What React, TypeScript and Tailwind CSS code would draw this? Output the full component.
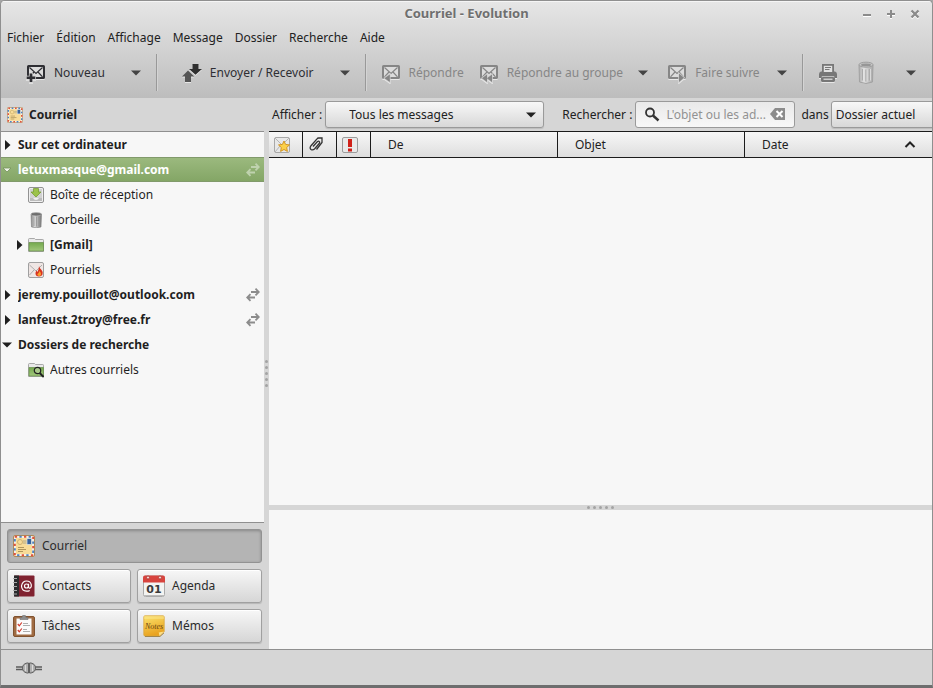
import type { ReactNode } from "react";

function CaretDown({ className = "text-[#333]" }: { className?: string }) {
  return (
    <svg width="10" height="6" viewBox="0 0 10 6" className={className} aria-hidden="true">
      <path d="M0 0.5h10L5 5.5z" fill="currentColor" />
    </svg>
  );
}

type Badge = "new" | "reply" | "replyAll" | "forward";

const badgePaths: Record<Badge, string> = {
  new: "M3.700 10.500h2.600v3h3v2.600h-3v3H3.700v-3h-3v-2.600h3z",
  reply: "M8.800 11.500v7.500L3.500 15.200z",
  replyAll: "M8 11.500v7.500L3 15.200zM13 11.500v7.500L8 15.200z",
  forward: "M12 10.500v8.500l5-4.200z",
};

function EnvelopeIcon({ badge }: { badge: Badge }) {
  return (
    <svg width="20" height="20" viewBox="0 0 20 20" aria-hidden="true" className="shrink-0 drop-shadow-[0_1px_0_rgba(255,255,255,0.6)]">
      <rect x="2" y="3" width="16" height="12" rx="0.500" fill="#dcdcdc" stroke="currentColor" strokeWidth="2" />
      <path d="M3.500 4.500L10 10.500l6.500-6M3.500 13.800L8 9M16.500 13.800L12 9" fill="none" stroke="currentColor" strokeWidth="1.200" />
      <path d={badgePaths[badge]} fill="#cfcfcf" stroke="#cfcfcf" strokeWidth="1.500" />
      <path d={badgePaths[badge]} fill="currentColor" />
    </svg>
  );
}

function SendReceiveIcon() {
  return (
    <svg width="20" height="20" viewBox="0 0 20 20" aria-hidden="true" className="shrink-0 drop-shadow-[0_1px_0_rgba(255,255,255,0.6)]">
      <path d="M10.500 1h6v5H20l-6.500 5.800L7 6h3.500z" fill="#303030" />
      <path d="M6 7.500l6.200 6H9V19H3v-5.500H0z" fill="#555" />
    </svg>
  );
}

function PrinterIcon() {
  return (
    <svg width="20" height="20" viewBox="0 0 20 20" aria-hidden="true" className="drop-shadow-[0_1px_0_rgba(255,255,255,0.6)]">
      <path d="M4 1h12v9H4z" fill="#777" />
      <path d="M5.800 2.800h8.400V9H5.800z" fill="#e2e2e2" />
      <path d="M7 4.500h6M7 6.500h4.500" stroke="#777" />
      <path d="M3 8.500h1.500V10h11V8.500H17q2 .5 2 2.500v4h-2v2.500q0 1.500-1.500 1.500h-11Q3 19 3 17.500V15H1v-4q0-2 2-2.500z" fill="#777" />
      <path d="M4 14.500v-1h12v1" fill="none" stroke="#bdbdbd" />
      <path d="M5.500 15.500h9V17h-9z" fill="#cdcdcd" />
    </svg>
  );
}

function BinIcon() {
  return (
    <svg width="16" height="24" viewBox="0 0 16 24" aria-hidden="true">
      <defs>
        <linearGradient id="bin" x1="0" x2="1">
          <stop offset="0" stopColor="#acacac" />
          <stop offset="0.35" stopColor="#e2e2e2" />
          <stop offset="1" stopColor="#a8a8a8" />
        </linearGradient>
      </defs>
      <path d="M1 4h14l-.5 17q-6.500 3-13 0z" fill="url(#bin)" stroke="#a2a2a2" />
      <path d="M4.500 8v11.500M8 8.500V20.500M11.500 8v11.500" stroke="#ababab" strokeWidth="1.400" />
      <path d="M5.500 8v11.500M9 8.500V20.500M12.500 8v11.500" stroke="#e8e8e8" strokeWidth="0.700" />
      <ellipse cx="8" cy="3.700" rx="7" ry="2.500" fill="#c8c8c8" stroke="#9d9d9d" />
      <ellipse cx="8" cy="3.900" rx="5" ry="1.300" fill="#969696" />
    </svg>
  );
}

function MailStampIcon({ size }: { size: number }) {
  return (
    <svg width={size} height={size} viewBox="0 0 22 22" aria-hidden="true" className="shrink-0">
      <rect x="0.500" y="0.500" width="21" height="21" rx="1.500" fill="#f6efe2" stroke="#b08a55" />
      <rect x="1.800" y="1.800" width="18.400" height="18.400" fill="none" stroke="#e0523f" strokeWidth="2" strokeDasharray="2.300 6.900" />
      <rect x="1.800" y="1.800" width="18.400" height="18.400" fill="none" stroke="#4b83c4" strokeWidth="2" strokeDasharray="2.300 6.900" strokeDashoffset="-4.600" />
      <rect x="3" y="3" width="16" height="16" fill="#f8dc98" />
      <circle cx="7" cy="7" r="2.500" fill="none" stroke="#c9ad6c" strokeWidth="0.900" />
      <path d="M10 6h4M10 8h4" stroke="#9c9a86" strokeWidth="0.800" />
      <rect x="14" y="3.500" width="4.500" height="6" fill="#35619d" stroke="#dfe8f4" strokeWidth="0.700" />
      <path d="M5 12.500h6M5 14.500h8M5 16.500h5" stroke="#a78d55" strokeWidth="0.900" />
    </svg>
  );
}

function ContactsIcon() {
  return (
    <svg width="22" height="22" viewBox="0 0 22 22" aria-hidden="true" className="shrink-0">
      <rect x="1" y="0.500" width="20.500" height="21" rx="1" fill="#802230" />
      <path d="M1 0.500h5v21H1z" fill="#2b2b2d" />
      <path d="M0 3.500h4M0 7.500h4M0 11.500h4M0 15.500h4M0 19h4" stroke="#aaa" strokeWidth="1.100" />
      <circle cx="13.500" cy="11" r="2" fill="none" stroke="#fff" strokeWidth="1.200" />
      <path d="M15.500 8.800v3.200q.3 1.500 1.800 1 1.300-.7 1-3.200Q17.500 6 13.500 6T8.500 11q.3 5 5 5.200 2 0 3.200-.8" fill="none" stroke="#fff" strokeWidth="1.200" />
    </svg>
  );
}

function AgendaIcon() {
  return (
    <svg width="22" height="22" viewBox="0 0 22 22" aria-hidden="true" className="shrink-0">
      <rect x="0.500" y="1" width="21" height="20.500" rx="2" fill="#f4f4f2" stroke="#aaa" />
      <path d="M0 7.500V2.500Q0 0.500 2 0.500h18q2 0 2 2v5z" fill="#d8443e" />
      <path d="M1 20.500h20" stroke="#bbb" />
      <circle cx="5" cy="2.500" r="1.500" fill="#f8d5d2" stroke="#a22f2a" strokeWidth="0.700" />
      <circle cx="17" cy="2.500" r="1.500" fill="#f8d5d2" stroke="#a22f2a" strokeWidth="0.700" />
      <text x="11" y="18" textAnchor="middle" fontFamily="DejaVu Sans, sans-serif" fontWeight="bold" fontSize="11" fill="#3c3c3c">01</text>
    </svg>
  );
}

function TasksIcon() {
  return (
    <svg width="22" height="22" viewBox="0 0 22 22" aria-hidden="true" className="shrink-0">
      <rect x="0.500" y="1.500" width="21" height="20" rx="1.500" fill="#a06b42" stroke="#80522f" />
      <path d="M3.500 3.500h15v16h-15z" fill="#fbfbfb" />
      <path d="M7 4.500V2.500h2Q9 0 11 0t2 2.500h2v2z" fill="#8d8d8d" stroke="#6f6f6f" strokeWidth="0.600" />
      <path d="M4.800 9l1.500 1.800 2.500-3.300M4.800 15l1.500 1.800 2.500-3.300" fill="none" stroke="#d23a2c" strokeWidth="1.200" />
      <path d="M10 8.500h5M10 10.500h7M10 14.500h4M10 16.500h7" stroke="#9a9a9a" strokeWidth="0.800" />
    </svg>
  );
}

function MemoIcon() {
  return (
    <svg width="22" height="22" viewBox="0 0 22 22" aria-hidden="true" className="shrink-0">
      <defs>
        <linearGradient id="memo" x1="0" x2="0.300" y1="0" y2="1">
          <stop offset="0" stopColor="#fbe36c" />
          <stop offset="1" stopColor="#e9a21f" />
        </linearGradient>
      </defs>
      <path d="M2 0.800h18q1.200 0 1.200 1.200v14.500l-4.500 4.500H2q-1.200 0-1.200-1.200V2Q0.800 0.800 2 0.800z" fill="url(#memo)" stroke="#d9a63a" strokeWidth="0.800" />
      <path d="M1 1h20v3H1z" fill="#fdec9a" opacity="0.400" />
      <path d="M21 16.500l-4.500 4.500-.8-3.500z" fill="#fbe08a" />
      <path d="M2 21.500h15l4-3.500" fill="none" stroke="#8a6a2a" strokeWidth="0.700" />
      <text x="11" y="13.500" textAnchor="middle" fontFamily="Liberation Serif, serif" fontStyle="italic" fontSize="8" fill="#6b4410">Notes</text>
    </svg>
  );
}

function InboxIcon() {
  return (
    <svg width="16" height="16" viewBox="0 0 16 16" aria-hidden="true">
      <rect x="0.500" y="0.500" width="15" height="15" rx="1.500" fill="#efefef" stroke="#929292" />
      <path d="M2 2h12v9H2z" fill="#d2d2d2" />
      <path d="M2 11h3q1 2 3 2t3-2h3v3H2z" fill="#bcbcbc" />
      <path d="M5.500 1.500h5V5H13L8 10 3 5h2.500z" fill="#9cc24a" stroke="#719a2a" strokeWidth="0.700" />
    </svg>
  );
}

function TrashIcon() {
  return (
    <svg width="16" height="16" viewBox="0 0 16 16" aria-hidden="true">
      <defs>
        <linearGradient id="can" x1="0" x2="1">
          <stop offset="0" stopColor="#808080" />
          <stop offset="0.350" stopColor="#dcdcdc" />
          <stop offset="1" stopColor="#787878" />
        </linearGradient>
      </defs>
      <path d="M3 2h10.500l-.5 13q-4.500 1.500-9.500 0z" fill="url(#can)" stroke="#808080" strokeWidth="0.600" />
      <path d="M6 4.500v9.500M8.500 4.500v10M11 4.500v9.500" stroke="#8d8d8d" strokeWidth="0.700" />
      <ellipse cx="8.200" cy="2.200" rx="5.200" ry="1.700" fill="#6d6d6d" stroke="#b0b0b0" strokeWidth="0.700" />
    </svg>
  );
}

function FolderIcon({ search = false }: { search?: boolean }) {
  return (
    <svg width="16" height="16" viewBox="0 0 16 16" aria-hidden="true">
      <defs>
        <linearGradient id="folder" x1="0" x2="0" y1="0" y2="1">
          <stop offset="0" stopColor="#74a94e" />
          <stop offset="1" stopColor="#a2c77c" />
        </linearGradient>
      </defs>
      <path d="M0.500 14.500V2.500q0-1 1-1h5l1 1h7.200q.8 0 .8.800v11.200z" fill="#e9e9e9" stroke="#979797" strokeWidth="0.800" />
      <path d="M1 5.500h14.500v8.500H1z" fill="url(#folder)" stroke="#668d49" strokeWidth="0.700" />
      {search && (
        <g fill="none" stroke="#222">
          <circle cx="9.500" cy="8.500" r="3.200" fill="#a9c989" strokeWidth="1.200" />
          <path d="M11.700 11l4 4" strokeWidth="2" />
        </g>
      )}
    </svg>
  );
}

function JunkIcon() {
  return (
    <svg width="16" height="16" viewBox="0 0 16 16" aria-hidden="true">
      <rect x="0.500" y="0.500" width="15" height="15" rx="1.500" fill="#efe6e4" stroke="#a0a0a0" />
      <path d="M1.500 3l6.500 6 6-6M1.500 13L6 8" fill="none" stroke="#a5a5a5" strokeWidth="0.900" />
      <path d="M11 4q.5 2.500 2.500 4 2 2 1 4.500-1 2-3.500 2-3 0-3.500-2.500-.2-2 1-3.500l1 1.500Q11 7.500 11 4z" fill="#d9341f" />
      <path d="M11.500 9q1.800 1.500 1.500 3.500-.5 1.500-2 1.500-1.500-.2-1.700-2 1.200.2 2.200-3z" fill="#f7a12c" />
    </svg>
  );
}

function SyncIcon() {
  return (
    <svg width="14" height="14" viewBox="0 0 14 14" aria-hidden="true" fill="none" stroke="currentColor" strokeWidth="1.800">
      <path d="M5 4h8M9.500 0.700L12.800 4 9.500 7.300" />
      <path d="M9 9.500H1M4.500 6.200L1.200 9.500l3.300 3.300" />
    </svg>
  );
}

function ToolButton({ icon, label, disabled }: { icon: ReactNode; label: string; disabled?: boolean }) {
  return (
    <button
      type="button"
      disabled={disabled}
      className={"flex h-8 shrink-0 items-center gap-2 whitespace-nowrap " + (disabled ? "text-[#868686]" : "text-[#2e2e33]")}
    >
      {icon}
      <span>{label}</span>
    </button>
  );
}

function MenuArrow({ label }: { label: string }) {
  return (
    <button type="button" aria-label={label} className="flex h-8 w-[26px] shrink-0 items-center justify-center">
      <CaretDown className="text-[#444]" />
    </button>
  );
}

function Separator() {
  return <div className="h-[37px] w-[2px] shrink-0 border-r border-[#d4d4d4] bg-[#999]" />;
}

type RowProps = {
  label: string;
  icon?: ReactNode;
  state?: "open" | "closed";
  bold?: boolean;
  selected?: boolean;
  sync?: boolean;
};

function TreeRow({ label, icon, state, bold, selected, sync }: RowProps) {
  return (
    <li
      className={
        "flex h-[25px] items-center pr-1 " +
        (selected
          ? "border-y border-[#819a6b] bg-linear-to-b from-[#9bb97e] to-[#84a666] text-white"
          : "text-[#1f1f1f]")
      }
    >
      <span className={"flex w-[17px] shrink-0 items-center " + (icon ? "ml-[10px] pl-[3px]" : "pl-px")}>
        {state === "closed" && (
          <svg width="10" height="10" viewBox="0 0 10 10" aria-hidden="true" className="shrink-0">
            <path d="M3 0v10l5.500-5z" fill="currentColor" />
          </svg>
        )}
        {state === "open" && !selected && (
          <svg width="10" height="10" viewBox="0 0 10 10" aria-hidden="true" className="shrink-0">
            <path d="M0 2.500h10L5 7.500z" fill="currentColor" />
          </svg>
        )}
        {state === "open" && selected && (
          <svg width="10" height="10" viewBox="0 0 10 10" aria-hidden="true" className="shrink-0">
            <path d="M1 3h8L5 7z" fill="#eef4e8" stroke="#74905c" strokeWidth="0.800" />
          </svg>
        )}
      </span>
      {icon && <span className="mr-[6px] shrink-0">{icon}</span>}
      <span className={"min-w-0 flex-1 truncate " + (bold ? "font-bold" : "")}>{label}</span>
      {sync && (
        <span className={selected ? "text-[#bfd2ae]" : "text-[#8c8c8c]"}>
          <SyncIcon />
        </span>
      )}
    </li>
  );
}

function SwitchButton({ icon, label, active, wide }: { icon: ReactNode; label: string; active?: boolean; wide?: boolean }) {
  return (
    <button
      type="button"
      aria-pressed={!!active}
      className={
        "flex h-[34px] items-center gap-[7px] rounded-[3px] border pl-[5px] text-[#2b2b2b] " +
        (wide ? "col-span-2 " : "") +
        (active
          ? "border-[#929292] bg-[#b4b4b4] shadow-[inset_0_1px_3px_rgba(0,0,0,0.25)]"
          : "border-[#a0a0a0] bg-linear-to-b from-[#f7f7f7] to-[#d6d6d6] shadow-[0_1px_1px_rgba(0,0,0,0.15),inset_0_1px_0_#fff]")
      }
    >
      {icon}
      <span>{label}</span>
    </button>
  );
}

function Grip({ vertical }: { vertical?: boolean }) {
  return (
    <div className={"flex gap-[3px] " + (vertical ? "flex-col" : "")}>
      {[0, 1, 2, 3, 4].map((n) => (
        <span key={n} className="size-[3px] rounded-full bg-[#a3a3a3]" />
      ))}
    </div>
  );
}

const menus = ["Fichier", "Édition", "Affichage", "Message", "Dossier", "Recherche", "Aide"];
const headCell = "border-y border-r border-[#1c1c1c] p-0 text-left font-normal";

export default function App() {
  return (
    <div className="h-screen bg-[#a5a5a5] font-['Noto_Sans',sans-serif] text-[12px] leading-4 text-[#212121]">
      <div className="flex h-full flex-col overflow-hidden rounded-t-[5px] border border-b-3 border-[#8f8f8f] border-b-[#6e6e6e] bg-[#d6d6d6]">
        <header className="shrink-0 bg-linear-to-b from-[#e6e6e6] via-[#d4d4d4] via-45% to-[#bdbdbd]">
          <div className="grid h-[26px] grid-cols-[1fr_auto_1fr] items-center border-t border-[#f5f5f5] pb-[3px]">
            <h1 className="col-start-2 text-[13px] font-bold text-[#6f6f6f] [text-shadow:0_1px_0_#f4f4f4]">Courriel - Evolution</h1>
            <div className="flex justify-end gap-[10px] pr-[10px] text-[#8b8b8b]">
              <button type="button" aria-label="Réduire" className="drop-shadow-[0_1px_0_#fff]">
                <svg width="14" height="14" viewBox="0 0 14 14"><path d="M3 9h8" stroke="currentColor" strokeWidth="2" /></svg>
              </button>
              <button type="button" aria-label="Agrandir" className="drop-shadow-[0_1px_0_#fff]">
                <svg width="14" height="14" viewBox="0 0 14 14"><path d="M3 8h8M7 4v8" stroke="currentColor" strokeWidth="2" /></svg>
              </button>
              <button type="button" aria-label="Fermer" className="drop-shadow-[0_1px_0_#fff]">
                <svg width="14" height="14" viewBox="0 0 14 14"><path d="M3.500 4.500l7 7M10.500 4.500l-7 7" stroke="currentColor" strokeWidth="2.400" /></svg>
              </button>
            </div>
          </div>
          <nav className="flex h-[22px] items-center gap-3 px-[6px]">
            {menus.map((m) => (
              <button key={m} type="button">{m}</button>
            ))}
          </nav>
          <div className="flex h-[49px] items-center pb-[2px] pl-[25px]">
            <ToolButton icon={<EnvelopeIcon badge="new" />} label="Nouveau" />
            <div className="ml-[18px] flex"><MenuArrow label="Options de création" /></div>
            <div className="mr-6 ml-[7px]"><Separator /></div>
            <ToolButton icon={<SendReceiveIcon />} label="Envoyer / Recevoir" />
            <div className="ml-[18px] flex"><MenuArrow label="Choisir le compte" /></div>
            <div className="mr-[14px] ml-[7px]"><Separator /></div>
            <ToolButton icon={<EnvelopeIcon badge="reply" />} label="Répondre" disabled />
            <div className="ml-[15px]"><ToolButton icon={<EnvelopeIcon badge="replyAll" />} label="Répondre au groupe" disabled /></div>
            <div className="ml-[7px] flex"><MenuArrow label="Options de réponse" /></div>
            <div className="ml-[11px]"><ToolButton icon={<EnvelopeIcon badge="forward" />} label="Faire suivre" disabled /></div>
            <div className="ml-[9px] flex"><MenuArrow label="Options de transfert" /></div>
            <div className="ml-[7px]"><Separator /></div>
            <button type="button" aria-label="Imprimer" className="ml-[14px] shrink-0"><PrinterIcon /></button>
            <button type="button" aria-label="Supprimer" className="ml-5 shrink-0"><BinIcon /></button>
            <div className="mr-2 ml-auto flex"><MenuArrow label="Plus d'outils" /></div>
          </div>
        </header>

        <div className="flex min-h-0 flex-1">
          <aside className="flex w-[263px] shrink-0 flex-col">
            <h2 className="flex h-[33px] shrink-0 items-center gap-[6px] pl-[6px] font-bold">
              <MailStampIcon size={16} />
              Courriel
            </h2>
            <ul className="min-h-0 flex-1 overflow-hidden border-y border-[#8f8f8f] bg-[#f7f7f7]">
              <TreeRow label="Sur cet ordinateur" state="closed" bold />
              <TreeRow label="letuxmasque@gmail.com" state="open" bold selected sync />
              <TreeRow label="Boîte de réception" icon={<InboxIcon />} />
              <TreeRow label="Corbeille" icon={<TrashIcon />} />
              <TreeRow label="[Gmail]" icon={<FolderIcon />} state="closed" bold />
              <TreeRow label="Pourriels" icon={<JunkIcon />} />
              <TreeRow label="jeremy.pouillot@outlook.com" state="closed" bold sync />
              <TreeRow label="lanfeust.2troy@free.fr" state="closed" bold sync />
              <TreeRow label="Dossiers de recherche" state="open" bold />
              <TreeRow label="Autres courriels" icon={<FolderIcon search />} />
            </ul>
            <div className="grid shrink-0 grid-cols-[124fr_125fr] gap-[6px] pt-[6px] pr-[2px] pb-[6px] pl-[6px]">
              <SwitchButton icon={<MailStampIcon size={22} />} label="Courriel" active wide />
              <SwitchButton icon={<ContactsIcon />} label="Contacts" />
              <SwitchButton icon={<AgendaIcon />} label="Agenda" />
              <SwitchButton icon={<TasksIcon />} label="Tâches" />
              <SwitchButton icon={<MemoIcon />} label="Mémos" />
            </div>
          </aside>

          <div className="flex w-[5px] shrink-0 items-center justify-center">
            <Grip vertical />
          </div>

          <main className="flex min-w-0 flex-1 flex-col">
            <div className="flex h-[33px] shrink-0 items-center overflow-hidden pl-[3px] whitespace-nowrap">
              <label htmlFor="show">Afficher :</label>
              <div className="relative ml-[3px] w-[219px] shrink-0">
                <select
                  id="show"
                  className="h-[27px] w-full appearance-none rounded-[3px] border border-[#9a9a9a] bg-linear-to-b from-[#f8f8f8] to-[#d8d8d8] pl-[23px] shadow-[0_1px_1px_rgba(0,0,0,0.12)]"
                >
                  <option>Tous les messages</option>
                </select>
                <span className="pointer-events-none absolute top-[11px] right-2"><CaretDown className="text-[#222]" /></span>
              </div>
              <label htmlFor="search" className="ml-[18px]">Rechercher :</label>
              <div className="ml-[3px] flex h-[27px] w-[160px] shrink-0 items-center rounded-[3px] border border-[#9a9a9a] bg-linear-to-b from-[#e9e9e9] to-[#f8f8f8] px-2">
                <svg width="16" height="16" viewBox="0 0 16 16" fill="none" stroke="#333" aria-hidden="true" className="shrink-0">
                  <circle cx="6" cy="5.500" r="4" strokeWidth="1.800" />
                  <path d="M9 8.500l5.500 5" strokeWidth="2.400" />
                </svg>
                <input id="search" type="text" placeholder="L'objet ou les ad..." className="ml-[6px] w-[104px] bg-transparent outline-none placeholder:text-[#929292]" />
                <button type="button" aria-label="Effacer" className="shrink-0">
                  <svg width="16" height="12" viewBox="0 0 16 12" className="mb-[2px]">
                    <path d="M5 0h10v12H5L0 6z" fill="#8c8c8c" />
                    <path d="M6.500 3l6 6M12.500 3l-6 6" stroke="#fff" strokeWidth="2" />
                  </svg>
                </button>
              </div>
              <label htmlFor="scope" className="ml-[6px]">dans</label>
              <select
                id="scope"
                className="ml-[2px] h-[27px] w-[140px] shrink-0 appearance-none rounded-[3px] border border-[#9a9a9a] bg-linear-to-b from-[#f8f8f8] to-[#d8d8d8] pl-1 shadow-[0_1px_1px_rgba(0,0,0,0.12)]"
              >
                <option>Dossier actuel</option>
              </select>
            </div>

            <div className="min-h-0 flex-1 bg-[#f7f7f7]">
              <table className="w-full table-fixed border-separate border-spacing-0">
                <thead>
                  <tr className="h-[27px] bg-linear-to-b from-[#f8f8f8] to-[#dddddd]">
                    <th scope="col" aria-label="État" className={headCell + " w-[34px] pl-[5px]"}>
                      <svg width="16" height="16" viewBox="0 0 16 16" aria-hidden="true">
                        <rect x="0.500" y="0.500" width="15" height="15" rx="1.500" fill="#e8e8e8" stroke="#a8a8a8" />
                        <path d="M1 1l7 7 7-7M1 15l5-6" fill="none" stroke="#b5b5b5" />
                        <path d="M10 4l1.600 3.400 3.900.5-2.800 2.600.7 3.900-3.400-1.900-3.400 1.900.7-3.900-2.800-2.600 3.900-.5z" fill="#fbd04a" stroke="#cf8f1a" strokeWidth="0.900" />
                      </svg>
                    </th>
                    <th scope="col" aria-label="Pièce jointe" className={headCell + " w-[34px] pl-[6px]"}>
                      <svg width="15" height="15" viewBox="0 0 15 15" fill="none" stroke="#333" strokeWidth="1.300" aria-hidden="true">
                        <path d="M4 9.500L8.500 4.500q1.200-.8 2 .3.400.9-.3 1.700L5.500 12q-1.800 1.600-3.500.5-1.600-1.500-.2-3.500L8 1.800q.6-.8 1.500-.8H13v4.500L7.500 12.500" />
                      </svg>
                    </th>
                    <th scope="col" aria-label="Important" className={headCell + " w-[34px] pl-[5px]"}>
                      <svg width="16" height="16" viewBox="0 0 16 16" aria-hidden="true">
                        <rect x="0.500" y="0.500" width="15" height="15" rx="1.500" fill="#e9e9e9" stroke="#9c9c9c" />
                        <path d="M6 2h4v8H6zM6 11.500h4v3H6z" fill="#d02018" />
                      </svg>
                    </th>
                    <th scope="col" className={headCell + " w-[187px]"}><span className="pl-[17px]">De</span></th>
                    <th scope="col" className={headCell + " w-[187px]"}><span className="pl-[17px]">Objet</span></th>
                    <th scope="col" aria-sort="ascending" className="border-y border-[#1c1c1c] p-0 text-left font-normal">
                      <span className="flex items-center justify-between pr-4 pl-[17px]">
                        Date
                        <svg width="12" height="8" viewBox="0 0 12 8" aria-hidden="true">
                          <path d="M1.500 6L6 1.500 10.500 6" fill="none" stroke="#222" strokeWidth="2" />
                        </svg>
                      </span>
                    </th>
                  </tr>
                </thead>
              </table>
            </div>
            <div className="flex h-[5px] shrink-0 items-center justify-center"><Grip /></div>
            <section aria-label="Aperçu" className="h-[139px] shrink-0 bg-[#f7f7f7]" />
          </main>
        </div>

        <footer className="flex h-9 shrink-0 items-center border-t border-[#8f8f8f] pl-[14px]">
          <button type="button" aria-label="En ligne">
            <svg width="28" height="12" viewBox="0 0 28 12">
              <path d="M1 5h8M1 7.500h8M19 5h8M19 7.500h8" stroke="#5c5c5c" strokeWidth="1.300" />
              <path d="M13.500 1v10H12Q7.500 10 7.500 6T12 1zM14.500 1v10H16q4.500-1 4.500-5T16 1z" fill="#b0b0b0" stroke="#5f5f5f" />
              <path d="M10.500 3v6M17.500 3v6" stroke="#dcdcdc" />
            </svg>
          </button>
        </footer>
      </div>
    </div>
  );
}
